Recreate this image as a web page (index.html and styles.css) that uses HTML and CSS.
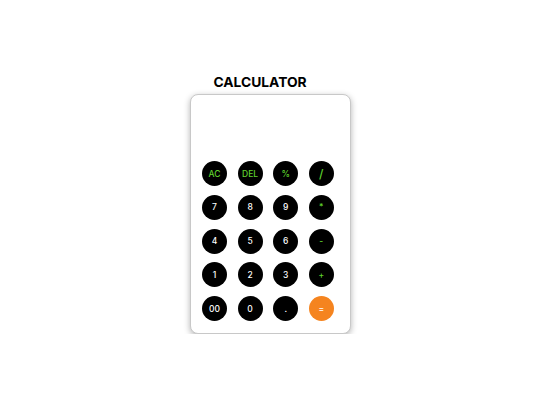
FILE: index.html
```html
<!DOCTYPE html>
<html>
<head>
<meta charset="utf-8">
<link rel="stylesheet" href="styles.css">
</head>
<body>
<div class="wrap">
  <h1 class="title">CALCULATOR</h1>
  <div class="card">
    <div class="display"></div>
    <div class="keys">
      <button class="key op">AC</button>
      <button class="key op">DEL</button>
      <button class="key op">%</button>
      <button class="key op slash">/</button>
      <button class="key">7</button>
      <button class="key">8</button>
      <button class="key">9</button>
      <button class="key op">*</button>
      <button class="key">4</button>
      <button class="key">5</button>
      <button class="key">6</button>
      <button class="key op">-</button>
      <button class="key">1</button>
      <button class="key">2</button>
      <button class="key">3</button>
      <button class="key op">+</button>
      <button class="key">00</button>
      <button class="key">0</button>
      <button class="key">.</button>
      <button class="key eq">=</button>
    </div>
  </div>
</div>
</body>
</html>
```
FILE: styles.css
```css
html, body {
  margin: 0;
  padding: 0;
  background: #ffffff;
  font-family: Inter, "Open Sans", "Liberation Sans", sans-serif;
}
.wrap {
  display: flex;
  flex-direction: column;
  align-items: center;
  padding-top: 74px;
}
.title {
  margin: 0 20px 3px 0;
  font-family: Inter, "Open Sans", sans-serif;
  font-size: 13.8px;
  font-weight: 700;
  line-height: 17px;
  color: #000;
}
.card {
  box-sizing: border-box;
  width: 161px;
  height: 240px;
  border: 1px solid #c8c8c8;
  border-radius: 8px;
  box-shadow: 0 2px 6px rgba(0, 0, 0, 0.3);
  background: #fff;
}
.display {
  height: 66px;
}
.keys {
  display: grid;
  grid-template-columns: repeat(4, 25px);
  column-gap: 10.6px;
  row-gap: 8.8px;
  padding-left: 11.5px;
}
.key {
  width: 25px;
  height: 25px;
  padding: 0;
  border: none;
  border-radius: 50%;
  background: #000;
  color: #fff;
  font-family: Inter, "Open Sans", "Liberation Sans", sans-serif;
  font-size: 8.5px;
  font-weight: 500;
  display: flex;
  align-items: center;
  justify-content: center;
}
.op {
  color: #5fd22e;
}
.slash {
  font-size: 12px;
}
.eq {
  background: #f5841f;
  color: #fff;
}
```
